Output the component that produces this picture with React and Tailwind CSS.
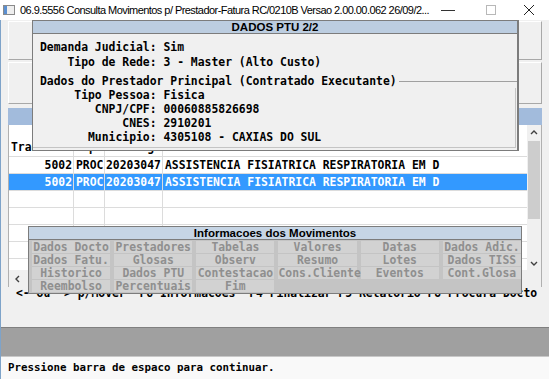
import React from "react";

const rows = [
  { id: "5002", tipo: "PROC", cod: "20203047", desc: "ASSISTENCIA FISIATRICA RESPIRATORIA EM D", selected: false },
  { id: "5002", tipo: "PROC", cod: "20203047", desc: "ASSISTENCIA FISIATRICA RESPIRATORIA EM D", selected: true },
  {}, {}, {}, {}, {},
];

const actions = [
  "Dados Docto", "Prestadores", "Tabelas", "Valores", "Datas", "Dados Adic.",
  "Dados Fatu.", "Glosas", "Observ", "Resumo", "Lotes", "Dados TISS",
  "Historico", "Dados PTU", "Contestacao", "Cons.Cliente", "Eventos", "Cont.Glosa",
  "Reembolso", "Percentuais", "Fim",
];

function TitleBar() {
  return (
    <div className="flex h-[20px] items-center bg-white font-['Liberation_Sans',Arial,sans-serif] text-[11px] font-normal text-black">
      <svg width="12" height="10" viewBox="0 0 12 10" className="ml-[3px] mr-[5px] shrink-0">
        <rect x="0.5" y="0.5" width="11" height="9" fill="#eeeeee" stroke="#8a8a8a" />
        <rect x="1" y="1" width="3" height="8" fill="#5b8fd0" />
      </svg>
      <span className="min-w-0 flex-1 whitespace-nowrap tracking-[-0.55px]">
        06.9.5556 Consulta Movimentos p/ Prestador-Fatura RC/0210B Versao 2.00.00.062 26/09/2...
      </span>
      <div className="flex shrink-0 items-center">
        <svg width="40" height="20" viewBox="0 0 40 20">
          <line x1="9" y1="10.5" x2="23" y2="10.5" stroke="#333" strokeWidth="1" />
        </svg>
        <svg width="40" height="20" viewBox="0 0 40 20">
          <rect x="14.5" y="5.5" width="9" height="9" fill="none" stroke="#b8b8b8" strokeWidth="1" />
        </svg>
        <svg width="37" height="20" viewBox="0 0 37 20">
          <path d="M12 5 L22 15 M22 5 L12 15" stroke="#222" strokeWidth="1" />
        </svg>
      </div>
    </div>
  );
}

function Chevron({ dir }) {
  const d = {
    up: "M3 7 L6 4 L9 7",
    down: "M3 5 L6 8 L9 5",
    left: "M7 3 L4 6 L7 9",
  }[dir];
  return (
    <svg width="12" height="12" viewBox="0 0 12 12">
      <path d={d} fill="none" stroke="#404040" strokeWidth="1.4" />
    </svg>
  );
}

function Browse() {
  return (
    <div className="mt-[4px] flex h-[179px] flex-col">
      <div className="h-[17px] bg-[#a2bbdc]" />
      <div className="flex h-[162px]">
        <div className="flex w-[519px] flex-col border-l border-[#b0b0b0] bg-white">
          <div className="h-[145px] overflow-hidden">
            <div className="flex h-[32px] items-end border-b border-[#dcdcdc]">
              <div className="h-full w-[65px] border-r border-[#dcdcdc] pl-[2px] pt-[14px]">Transacao</div>
              <div className="h-full w-[31px] border-r border-[#dcdcdc] pt-[14px] text-center">Tipo</div>
              <div className="h-full w-[58px] border-r border-[#dcdcdc] pr-[1px] pt-[14px] text-right">Codigo</div>
              <div className="h-full flex-1 pl-[2px] pt-[14px]">Descricao</div>
            </div>
            {rows.map((r, i) => (
              <div
                key={i}
                className={
                  "flex h-[17px] items-center border-b leading-[16px] " +
                  (r.selected ? "border-[#dcdcdc] bg-[#3399ff] text-white" : "border-[#dcdcdc]")
                }
              >
                <div className="h-full w-[65px] border-r border-[#dcdcdc] pr-[1px] text-right">{r.id}</div>
                <div className="h-full w-[31px] border-r border-[#dcdcdc] pl-[2px]">{r.tipo}</div>
                <div className="h-full w-[58px] border-r border-[#dcdcdc] pl-[1px]">{r.cod}</div>
                <div className="h-full flex-1 pl-[2px] whitespace-nowrap">{r.desc}</div>
              </div>
            ))}
          </div>
          <div className="flex h-[17px] items-center bg-[#f0f0f0]">
            <div className="flex w-[17px] justify-center">
              <Chevron dir="left" />
            </div>
          </div>
        </div>
        <div className="flex w-[15px] flex-col border-r border-[#b0b0b0] bg-[#f0f0f0]">
          <div className="flex h-[16px] items-center justify-center">
            <Chevron dir="up" />
          </div>
          <div className="mx-auto h-[78px] w-[12px] bg-[#cdcdcd]" />
          <div className="flex-1" />
          <div className="mb-[17px] flex h-[15px] items-center justify-center">
            <Chevron dir="down" />
          </div>
        </div>
      </div>
    </div>
  );
}

function Modal() {
  return (
    <div className="absolute left-[32px] top-[20px] flex h-[131px] w-[487px] flex-col border border-r-2 border-[#7c7c7c] bg-[#f0f0f0]">
      <div className="h-[13px] border-b border-[#7c7c7c] bg-[#bccde0] text-center font-['Liberation_Sans',Arial,sans-serif] text-[11.5px] leading-[12px] font-bold">
        DADOS PTU 2/2
      </div>
      <div className="pl-[7px] pt-[6px] leading-[15px] whitespace-pre">
        <div>Demanda Judicial: Sim</div>
        <div>    Tipo de Rede: 3 - Master (Alto Custo)</div>
      </div>
      <div className="mt-[4px] flex h-[14px] items-center leading-[14px]">
        <span className="pl-[7px] whitespace-pre">Dados do Prestador Principal (Contratado Executante)</span>
        <div className="ml-[2px] h-px flex-1 bg-[#a0a0a0]" />
      </div>
      <div className="mr-[1px] border-r border-b border-[#c4c4c4] pb-[3px] pl-[7px] leading-[14px] whitespace-pre">
        <div>     Tipo Pessoa: Fisica</div>
        <div>        CNPJ/CPF: 00060885826698</div>
        <div>            CNES: 2910201</div>
        <div>       Municipio: 4305108 - CAXIAS DO SUL</div>
      </div>
    </div>
  );
}

function Popup() {
  return (
    <div className="absolute left-[28px] top-[226px] flex h-[68px] w-[494px] flex-col border border-[#7c7c7c] bg-[#c4c4c4]">
      <div className="h-[13px] border-b border-[#7c7c7c] bg-[#c6d5e5] text-center font-['Liberation_Sans',Arial,sans-serif] text-[11.5px] leading-[12px] font-bold">
        Informacoes dos Movimentos
      </div>
      <div className="grid grid-cols-6 gap-x-[4px] gap-y-[1px] pl-[3px] pt-[1px]">
        {actions.map((a) => (
          <div key={a} className="h-[12px] bg-[#d2d2d2] text-center leading-[12px] whitespace-nowrap text-[#8f8f8f]">
            {a}
          </div>
        ))}
      </div>
    </div>
  );
}

export default function App() {
  return (
    <div className="relative h-[379px] w-[549px] overflow-hidden bg-[#f0f0f0] font-['DejaVu_Sans_Mono',monospace] text-[11.4px] font-bold text-black">
      <TitleBar />
      <div className="flex h-[359px] flex-col border-l border-[#7ea3c9]">
        <div className="flex flex-col px-[7px] pt-[1px]">
          <div className="h-[39px] border border-t-white border-l-white border-r-[#a8a8a8] border-b-[#a8a8a8] bg-[#f0f0f0]" />
          <div className="mt-[2px] h-[42px] border border-t-white border-l-white border-r-[#a8a8a8] border-b-[#a8a8a8] bg-[#f0f0f0]" />
          <Browse />
        </div>
        <div className="h-[13px] pl-[15px] leading-[13px] whitespace-pre">
          {"<- ou -> p/Mover  F6 Informacoes  F4 Finalizar F5 Relatorio F8 Procura Docto"}
        </div>
        <div className="flex-1" />
        <div className="h-[30px] border-t border-b border-t-[#808080] border-b-[#c8c8c8] bg-[#a0a0a0]" />
        <div className="flex h-[22px] items-center bg-[#f9f9f9] pl-[7px] text-[10.8px]">
          Pressione barra de espaco para continuar.
        </div>
      </div>
      <Modal />
      <Popup />
    </div>
  );
}
